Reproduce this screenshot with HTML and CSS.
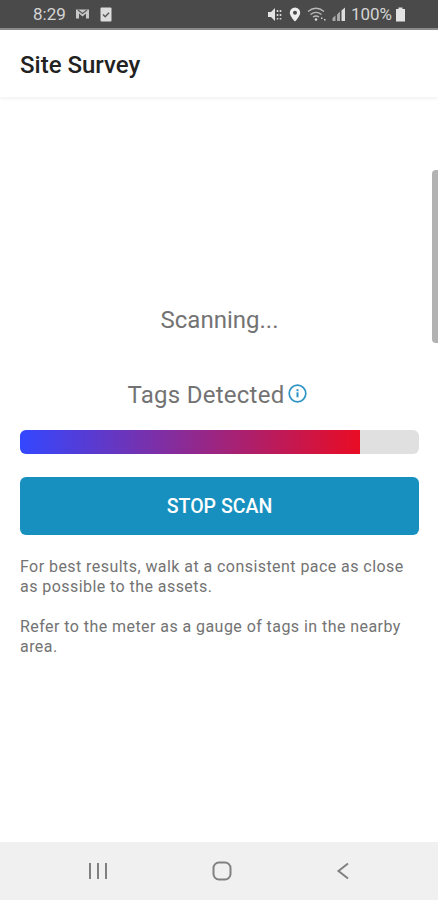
FILE: index.html
```html
<!DOCTYPE html>
<html lang="en">
<head>
  <meta charset="UTF-8">
  <title>Site Survey</title>
  <link rel="stylesheet" href="styles.css">
</head>
<body>
  <div class="status-bar">
    <span class="clock">8:29</span>
    <svg class="st-icon" width="15" height="12" viewBox="0 0 15 12"><path d="M1 1.500h13v9h-3V5.500L7.500 8.500 4 5.500v5H1z" fill="#c8c8c8"/><path d="M3 2l4.500 3.500L12 2" fill="none" stroke="#5a5a5a" stroke-width="1.200"/></svg>
    <svg class="st-icon st-check" width="12" height="15" viewBox="0 0 12 15"><rect x="0.500" y="0.500" width="11" height="14" rx="1" fill="#dcdcdc"/><path d="M3 7.500l2.200 2.200L9 5.800" fill="none" stroke="#5a5a5a" stroke-width="1.500"/></svg>
    <span class="st-spacer"></span>
    <svg class="st-icon" width="17" height="15" viewBox="0 0 17 15"><path d="M1 5h3l4-4v13l-4-4H1z" fill="#e4e4e4"/><path d="M10.500 3v2M10.500 7v2M10.500 11v1.500M13.500 3v2M13.500 7v2M13.500 11v1.500" stroke="#d8d8d8" stroke-width="1.600"/></svg>
    <svg class="st-icon st-pin" width="12" height="15" viewBox="0 0 12 15"><path fill-rule="evenodd" d="M6 .5a5.200 5.200 0 0 1 5.200 5.200C11.200 9.200 6 14.500 6 14.500S.8 9.200.8 5.700A5.200 5.200 0 0 1 6 .5zm0 3.200a2 2 0 1 0 0 4 2 2 0 0 0 0-4z" fill="#eee"/></svg>
    <svg class="st-icon st-wifi" width="20" height="15" viewBox="0 0 20 15"><path d="M1 4.500c5-4 11-4 16 0M3.500 7.500c3.500-2.700 7.500-2.700 11 0M6 10c2-1.400 4-1.400 6 0" fill="none" stroke="#b8b8b8" stroke-width="1.400"/><circle cx="9" cy="12.500" r="1.300" fill="#dcdcdc"/><path d="M14 10.500h1.500v1.500H14zM17 12h1.500v1.500H17z" fill="#d0d0d0"/></svg>
    <svg class="st-icon st-signal" width="14" height="14" viewBox="0 0 14 14"><path d="M.5 14v-3l3-2.500V14zM5 14V7.500l3-3V14z" fill="#a8a8a8"/><path d="M9.500 14V3.500L13 .5V14z" fill="#dcdcdc"/></svg>
    <span class="battery-pct">100%</span>
    <svg class="st-icon" width="11" height="15" viewBox="0 0 11 15"><path d="M3.500 .5h4V2H10v12.500H1V2h2.500z" fill="#e4e4e4"/></svg>
  </div>

  <header class="app-bar">Site Survey</header>

  <main class="content">
    <p class="scanning">Scanning...</p>
    <div class="tags-row">
      <span class="tags-label">Tags Detected</span>
      <svg class="info-icon" width="19" height="19" viewBox="0 0 19 19"><circle cx="9.500" cy="9.500" r="8.300" fill="none" stroke="#2f93c4" stroke-width="1.700"/><rect x="8.500" y="8.300" width="2" height="5" fill="#2f93c4"/><rect x="8.500" y="5.200" width="2" height="2" fill="#2f93c4"/></svg>
    </div>
    <div class="meter"><div class="meter-fill" style="width:85.300%"></div></div>
    <button class="stop-btn">STOP SCAN</button>
    <p class="hint">For best results, walk at a consistent pace as close as possible to the assets.</p>
    <p class="hint">Refer to the meter as a gauge of tags in the nearby area.</p>
  </main>

  <div class="scroll-handle"></div>

  <nav class="nav-bar">
    <svg width="18" height="18" viewBox="0 0 18 18"><path d="M1 1v16M9 1v16M17 1v16" stroke="#808080" stroke-width="2" fill="none"/></svg>
    <svg width="20" height="20" viewBox="0 0 20 20"><rect x="1.500" y="1.500" width="17" height="17" rx="5.500" fill="none" stroke="#808080" stroke-width="2"/></svg>
    <svg width="14" height="18" viewBox="0 0 14 18"><path d="M12 1.500L2.500 9l9.500 7.500" stroke="#808080" stroke-width="2" fill="none"/></svg>
  </nav>
</body>
</html>
```

FILE: styles.css
```css
* {
  box-sizing: border-box;
}
body {
  position: relative;
  display: flex;
  flex-direction: column;
  height: 900px;
  margin: 0;
  overflow: hidden;
  background: #fff;
  font-family: Roboto, sans-serif;
  color: #737373;
}
.status-bar {
  display: flex;
  align-items: center;
  height: 30px;
  padding: 0 32px 0 33px;
  background: #4a4a4a;
  border-bottom: 2px solid #8a8a8a;
  color: #d4d4d4;
}
.clock {
  font-size: 17px;
  margin-right: 9px;
}
.st-icon {
  flex: none;
}
.st-check {
  margin-left: 10px;
}
.st-spacer {
  flex: 1;
}
.st-pin {
  margin-left: 5px;
}
.st-wifi {
  margin-left: 6px;
}
.st-signal {
  margin-left: 5px;
}
.battery-pct {
  font-size: 17px;
  margin: 0 3px 0 5px;
}
.app-bar {
  height: 67px;
  padding: 21px 20px 0;
  font-size: 24px;
  font-weight: 500;
  line-height: 28px;
  color: #222;
  background: #fff;
  box-shadow: 0 2px 3px rgba(0, 0, 0, 0.05);
}
.content {
  flex: 1;
  padding: 0 19px 0 20px;
}
.scanning {
  margin: 209px 0 0;
  font-size: 24px;
  line-height: 28px;
  text-align: center;
}
.tags-row {
  display: flex;
  justify-content: center;
  align-items: center;
  gap: 4px;
  margin-top: 47px;
  height: 28px;
  padding-right: 4px;
}
.tags-label {
  font-size: 24px;
  line-height: 28px;
  letter-spacing: 0.25px;
}
.info-icon {
  margin-top: -3px;
}
.meter {
  height: 24px;
  margin-top: 21px;
  border-radius: 6px;
  overflow: hidden;
  background: #e0e0e0;
}
.meter-fill {
  height: 100%;
  background: linear-gradient(90deg, #3347ff, #e90c24);
}
.stop-btn {
  display: block;
  width: 100%;
  height: 58px;
  margin-top: 23px;
  padding-top: 2px;
  border: none;
  border-radius: 6px;
  background: #1790bf;
  color: #fff;
  font-family: Roboto, sans-serif;
  font-size: 19.5px;
  font-weight: 500;
}
.hint {
  margin: 22px 0 0;
  font-size: 16px;
  line-height: 20px;
  letter-spacing: 0.44px;
}
.hint + .hint {
  margin-top: 20px;
}
.scroll-handle {
  position: absolute;
  top: 170px;
  right: 0;
  width: 6px;
  height: 173px;
  border-radius: 4px 0 0 4px;
  background: #b2b2b2;
}
.nav-bar {
  display: flex;
  justify-content: space-between;
  align-items: center;
  height: 58px;
  padding: 0 88px 0 89px;
  background: #f0f0f0;
}
```
